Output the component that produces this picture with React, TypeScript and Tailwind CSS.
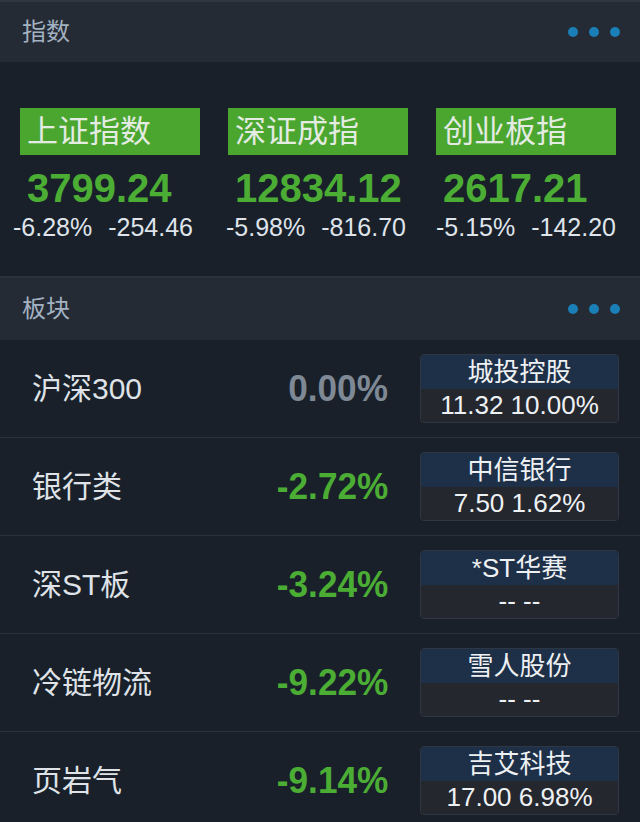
const font = { fontFamily: '"Liberation Sans", "Noto Sans CJK SC", sans-serif' };

const indices = [
  { name: "上证指数", value: "3799.24", pct: "-6.28%", chg: "-254.46", shift: "pr-[14px]" },
  { name: "深证成指", value: "12834.12", pct: "-5.98%", chg: "-816.70", shift: "pr-[4px]" },
  { name: "创业板指", value: "2617.21", pct: "-5.15%", chg: "-142.20", shift: "" },
];

const sectors = [
  { name: "沪深300", pct: "0.00%", flat: true, stock: "城投控股", quote: "11.32 10.00%" },
  { name: "银行类", pct: "-2.72%", flat: false, stock: "中信银行", quote: "7.50 1.62%" },
  { name: "深ST板", pct: "-3.24%", flat: false, stock: "*ST华赛", quote: "-- --" },
  { name: "冷链物流", pct: "-9.22%", flat: false, stock: "雪人股份", quote: "-- --" },
  { name: "页岩气", pct: "-9.14%", flat: false, stock: "吉艾科技", quote: "17.00 6.98%" },
];

function SectionHeader({ title, tall }: { title: string; tall?: boolean }) {
  return (
    <div
      className={`${tall ? "h-[62px]" : "h-[60px]"} flex items-center justify-between pl-[22px] pr-[20px] bg-[#252b35]`}
    >
      <span className="text-[24px] text-[#a3b2c1]">{title}</span>
      <div className="flex gap-[11px]">
        <span className="w-[10px] h-[10px] rounded-full bg-[#1a7fb6]" />
        <span className="w-[10px] h-[10px] rounded-full bg-[#1a7fb6]" />
        <span className="w-[10px] h-[10px] rounded-full bg-[#1a7fb6]" />
      </div>
    </div>
  );
}

export default function App() {
  return (
    <div className="w-[640px] h-[822px] overflow-hidden bg-[#19202a]" style={font}>
      <div className="h-[2px] bg-[#30363f]" />
      <SectionHeader title="指数" />

      {/* index cards */}
      <div className="h-[214px] flex gap-[28px] px-[20px] pt-[46px]">
        {indices.map((it) => (
          <div key={it.name} className="w-[180px] shrink-0">
            <div className="h-[47px] bg-[#4aa62f] pl-[7px] text-[31px] leading-[47px] text-[#e4ebe2]">
              {it.name}
            </div>
            <div className="mt-[13px] pl-[7px] text-[40px] leading-[40px] font-bold text-[#4cad35]">
              {it.value}
            </div>
            <div
              className={`mt-[6px] flex justify-center gap-[16px] whitespace-nowrap text-[25px] leading-[26px] text-[#dfe4ea] ${it.shift}`}
            >
              <span>{it.pct}</span>
              <span>{it.chg}</span>
            </div>
          </div>
        ))}
      </div>

      <div className="border-t-2 border-[#2c323b]">
        <SectionHeader title="板块" tall />
      </div>

      {sectors.map((s) => (
        <div key={s.name} className="h-[98px] flex items-center border-b border-[#2a313b]">
          <div className="flex-1 pl-[32px] text-[30px] text-[#dfe3e8]">{s.name}</div>
          <div
            className={`inline-block origin-right scale-x-[0.95] text-right text-[37px] font-bold ${
              s.flat ? "text-[#7e8995]" : "text-[#4cad35]"
            }`}
          >
            {s.pct}
          </div>
          <div className="ml-[32px] mr-[21px] w-[199px] rounded-[4px] border border-[#2e3743] overflow-hidden text-center text-[26px] text-[#eef1f4]">
            <div className="h-[34px] leading-[34px] bg-[#1e3047]">{s.stock}</div>
            <div className="h-[33px] leading-[33px] bg-[#24272e]">{s.quote}</div>
          </div>
        </div>
      ))}
    </div>
  );
}
